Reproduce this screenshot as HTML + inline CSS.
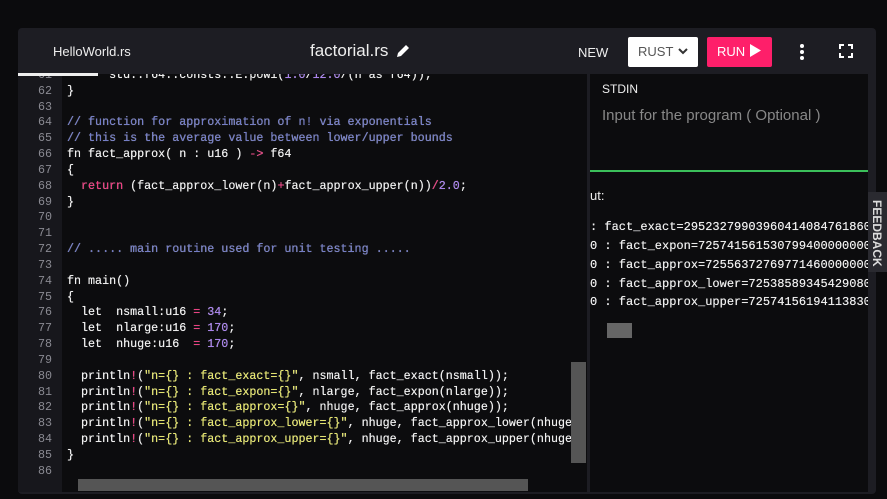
<!DOCTYPE html>
<html><head><meta charset="utf-8"><style>
*{margin:0;padding:0;box-sizing:border-box}
body{width:887px;height:499px;background:#0b0b0d;position:relative;overflow:hidden;font-family:"Liberation Sans",sans-serif;color:#fff}
.panel{position:absolute;left:18px;top:28px;width:858px;height:466px;background:#1d1d23;border-radius:4px}
.t{position:absolute;font-size:13px;color:#eee}
.ed{position:absolute;left:18px;top:74px;width:569px;height:418px;background:#0c0c0e;overflow:hidden}
.gut{position:absolute;left:0;top:0;width:44px;height:418px;background:#17171c}
.code{position:absolute;left:0;top:-6px;font-family:"Liberation Mono",monospace;font-size:11.7px;line-height:15.83px;white-space:pre;color:#f0f0f0;text-shadow:0 0 0.4px #fff}
.ln{display:inline-block;width:34px;text-align:right;color:#8a8a92;margin-right:15px;text-shadow:none}
.c{color:#6e78c8}.p{color:#f0327a}.n{color:#a67cf0}.s{color:#e8e866}.r{color:#f0327a}
.rp{position:absolute;left:590px;top:74px;width:278px;height:418px;background:#0c0c0e;overflow:hidden}
.out{position:absolute;left:0;font-family:"Liberation Mono",monospace;font-size:12px;white-space:pre;color:#eee;text-shadow:0 0 0.4px #fff}
</style></head><body>
<div class="panel"></div>
<div class="t" style="left:53px;top:44px">HelloWorld.rs</div>
<div class="t" style="left:310px;top:41px;font-size:17px">factorial.rs</div>
<svg style="position:absolute;left:395px;top:43px" width="16" height="16" viewBox="0 0 16 16"><path d="M2 14l1-4 8-8 3 3-8 8z" fill="#fff"/></svg>
<div class="t" style="left:578px;top:45px;font-size:13px">NEW</div>
<div style="position:absolute;left:628px;top:37px;width:70px;height:30px;background:#fff;border-radius:2px;color:#555;font-size:13px;line-height:30px;padding-left:10px">RUST <svg width="12" height="10" viewBox="0 0 12 10"><path d="M2 3l4 4 4-4" stroke="#333" stroke-width="2" fill="none"/></svg></div>
<div style="position:absolute;left:707px;top:37px;width:65px;height:30px;background:#fe1f6a;border-radius:2px;color:#fff;font-size:13px;line-height:30px;padding-left:10px">RUN <svg width="12" height="13" viewBox="0 0 12 13" style="vertical-align:-1px"><path d="M1 0l11 6.5L1 13z" fill="#fff"/></svg></div>
<svg style="position:absolute;left:799px;top:43px" width="6" height="18"><circle cx="3" cy="3" r="2" fill="#fff"/><circle cx="3" cy="9" r="2" fill="#fff"/><circle cx="3" cy="15" r="2" fill="#fff"/></svg>
<svg style="position:absolute;left:839px;top:44px" width="14" height="14" viewBox="0 0 14 14" fill="none" stroke="#fff" stroke-width="2"><path d="M1 5V1h4M9 1h4v4M13 9v4H9M5 13H1V9"/></svg>
<div class="ed"><div class="gut"></div>
<div class="code"><span class="ln">61</span>      std::f64::consts::E.powi(<span class="n">1.0</span>/<span class="n">12.0</span>/(n as f64));
<span class="ln">62</span>}
<span class="ln">63</span>
<span class="ln">64</span><span class="c">// function for approximation of n! via exponentials</span>
<span class="ln">65</span><span class="c">// this is the average value between lower/upper bounds</span>
<span class="ln">66</span>fn fact_approx( n : u16 ) <span class="p">-></span> f64
<span class="ln">67</span>{
<span class="ln">68</span>  <span class="r">return</span> (fact_approx_lower(n)<span class="p">+</span>fact_approx_upper(n))<span class="p">/</span><span class="n">2.0</span>;
<span class="ln">69</span>}
<span class="ln">70</span>
<span class="ln">71</span>
<span class="ln">72</span><span class="c">// ..... main routine used for unit testing .....</span>
<span class="ln">73</span>
<span class="ln">74</span>fn main()
<span class="ln">75</span>{
<span class="ln">76</span>  let  nsmall:u16 <span class="p">=</span> <span class="n">34</span>;
<span class="ln">77</span>  let  nlarge:u16 <span class="p">=</span> <span class="n">170</span>;
<span class="ln">78</span>  let  nhuge:u16  <span class="p">=</span> <span class="n">170</span>;
<span class="ln">79</span>
<span class="ln">80</span>  println<span class="p">!</span>(<span class="s">"n={} : fact_exact={}"</span>, nsmall, fact_exact(nsmall));
<span class="ln">81</span>  println<span class="p">!</span>(<span class="s">"n={} : fact_expon={}"</span>, nlarge, fact_expon(nlarge));
<span class="ln">82</span>  println<span class="p">!</span>(<span class="s">"n={} : fact_approx={}"</span>, nhuge, fact_approx(nhuge));
<span class="ln">83</span>  println<span class="p">!</span>(<span class="s">"n={} : fact_approx_lower={}"</span>, nhuge, fact_approx_lower(nhuge
<span class="ln">84</span>  println<span class="p">!</span>(<span class="s">"n={} : fact_approx_upper={}"</span>, nhuge, fact_approx_upper(nhuge
<span class="ln">85</span>}
<span class="ln">86</span></div>
<div style="position:absolute;left:553px;top:0;width:16px;height:404px;background:#0c0c0e"></div>
<div style="position:absolute;left:553px;top:288px;width:15px;height:101px;background:#555"></div>
<div style="position:absolute;left:44px;top:404px;width:525px;height:14px;background:#0c0c0e"></div>
<div style="position:absolute;left:60px;top:405px;width:450px;height:12px;background:#555"></div>
</div>
<div style="position:absolute;left:18px;top:73px;width:80px;height:3px;background:#eee"></div>
<div class="rp">
<div class="t" style="left:12px;top:8px;font-size:12px">STDIN</div>
<div class="t" style="left:12px;top:33px;font-size:15px;color:#888">Input for the program ( Optional )</div>
<div style="position:absolute;left:0;top:96px;width:278px;height:2px;background:#3bbf5a"></div>
<div class="t" style="left:0;top:114px;font-size:13px">ut:</div>
<div class="out" style="top:146px">: fact_exact=29523279903960414084761860</div>
<div class="out" style="top:165px">0 : fact_expon=72574156153079940000000000</div>
<div class="out" style="top:184px">0 : fact_approx=7255637276977146000000000</div>
<div class="out" style="top:203px">0 : fact_approx_lower=72538589345429080000</div>
<div class="out" style="top:221px">0 : fact_approx_upper=72574156194113830000</div>
<div style="position:absolute;left:17px;top:249px;width:25px;height:15px;background:#666"></div>
</div>
<div style="position:absolute;left:868px;top:192px;width:19px;height:80px;background:#2a2a30"></div>
<div style="position:absolute;left:870px;top:200px;writing-mode:vertical-rl;font-size:12px;font-weight:bold;color:#ddd">FEEDBACK</div>
</body></html>
